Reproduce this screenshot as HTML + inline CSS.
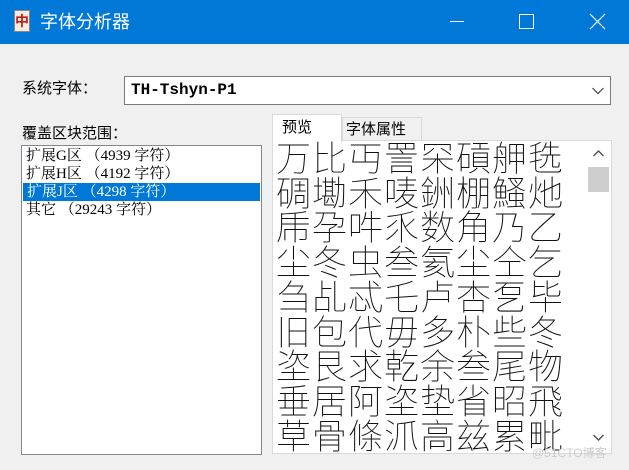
<!DOCTYPE html>
<html><head><meta charset="utf-8"><style>
*{margin:0;padding:0;box-sizing:border-box}
body{width:629px;height:470px;background:#f0f0f0;position:relative;overflow:hidden;font-family:"Liberation Sans","Noto Sans CJK SC",sans-serif;font-size:15px;color:#000}
.t{position:absolute;left:0;top:0;width:629px;height:44px;background:#0078d7;color:#fff}
.ab{position:absolute}
.lst div{height:18px;line-height:18px;padding-left:4px;font-family:"Liberation Serif","Noto Serif CJK SC",serif;font-size:15px;white-space:nowrap}
.grid{position:absolute;left:276px;top:140px;width:310px;height:312px;overflow:hidden;font-family:"Noto Sans CJK SC",sans-serif;font-weight:100;font-size:35px;line-height:34.7px;letter-spacing:1px;white-space:pre;color:#111}
</style></head><body>
<div class="t">
 <div class="ab" style="left:14px;top:10px;width:16px;height:22px;background:#f4ece0;border:1px solid #888;color:#c0201a;font-size:14px;line-height:20px;text-align:center;font-weight:bold">中</div>
 <div class="ab" style="left:40px;top:9px;font-size:18px;font-family:'Noto Sans CJK SC',sans-serif;line-height:24px">字体分析器</div>
 <div class="ab" style="left:450px;top:21px;width:14px;height:1px;background:#fff"></div>
 <div class="ab" style="left:519px;top:14px;width:15px;height:15px;border:1px solid #fff"></div>
 <svg class="ab" style="left:589px;top:13px" width="17" height="17"><path d="M1 1L16 16M16 1L1 16" stroke="#fff" stroke-width="1.2"/></svg>
</div>
<div class="ab" style="left:22px;top:78px;font-family:'Noto Sans CJK SC',sans-serif;line-height:20px">系统字体：</div>
<div class="ab" style="left:124px;top:76px;width:487px;height:29px;background:#fff;border:1px solid #7a7a7a">
 <div class="ab" style="left:6px;top:3px;font-family:'Liberation Mono',monospace;font-weight:bold;font-size:16px;line-height:20px">TH-Tshyn-P1</div>
 <svg class="ab" style="left:467px;top:10px" width="12" height="8"><path d="M0.5 1L6 6.5L11.5 1" stroke="#444" fill="none" stroke-width="1.2"/></svg>
</div>
<div class="ab" style="left:22px;top:123px;font-family:'Noto Sans CJK SC',sans-serif;line-height:20px">覆盖区块范围：</div>
<div class="ab lst" style="left:21px;top:145px;width:241px;height:310px;background:#fff;border:1px solid #828790;padding-top:1px">
 <div>扩展G区 （4939 字符）</div>
 <div>扩展H区 （4192 字符）</div>
 <div style="background:#0078d7;color:#fff;margin:0 1px">扩展J区 （4298 字符）</div>
 <div>其它 （29243 字符）</div>
</div>
<div class="ab" style="left:272px;top:140px;width:340px;height:314px;background:#fff;border:1px solid #d9d9d9"></div>
<div class="ab" style="left:272px;top:114px;width:70px;height:28px;background:#fff;border:1px solid #d9d9d9;border-bottom:none;font-family:'Noto Sans CJK SC',sans-serif;padding:1px 0 0 9px;line-height:22px">预览</div>
<div class="ab" style="left:342px;top:117px;width:80px;height:23px;background:#f0f0f0;border:1px solid #d9d9d9;border-bottom:none;font-family:'Noto Sans CJK SC',sans-serif;padding-left:3px;line-height:21px">字体属性</div>
<div class="grid">万比丏詈罙碽舺毨
碉墈禾唛銂棚鰠灺
乕孕吽乑数角乃乙
尘冬虫叁氦尘仝乞
刍乩忒乇卢杏乭毕
旧包代毋多朴些冬
垐艮求乾余叁尾物
垂居阿垐垫省昭飛
草骨條沠高兹累毗</div>
<div class="ab" style="left:587px;top:142px;width:23px;height:311px;background:#fff">
 <svg class="ab" style="left:6px;top:8px" width="11" height="7"><path d="M0.5 6L5.5 1L10.5 6" stroke="#555" fill="none" stroke-width="1.5"/></svg>
 <div class="ab" style="left:1px;top:25px;width:21px;height:25px;background:#cdcdcd"></div>
 <svg class="ab" style="left:6px;top:292px" width="11" height="7"><path d="M0.5 1L5.5 6L10.5 1" stroke="#555" fill="none" stroke-width="1.5"/></svg>
</div>
<div class="ab" style="left:532px;top:444px;color:#ccc;font-size:12px;font-family:'Liberation Sans','Noto Sans CJK SC',sans-serif">@51CTO博客</div>
</body></html>
